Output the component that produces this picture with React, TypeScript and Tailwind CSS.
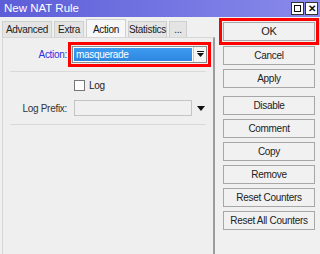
const font = "font-['Liberation_Sans',Arial,sans-serif]";
const txt = "text-[10px] tracking-[-0.3px]";

const tabs = [
  { label: "Advanced", w: "w-[50px]" },
  { label: "Extra", w: "w-[30px]" },
  { label: "Action", w: "w-[40px]", active: true },
  { label: "Statistics", w: "w-[39px]" },
  { label: "...", w: "w-[18px]" },
];

function Btn({ label, className = "" }: { label: string; className?: string }) {
  return (
    <div
      className={`flex h-[19px] w-[92px] items-center justify-center whitespace-nowrap border border-[#a7a7a7] bg-[#f1f1f1] text-[#222] ${className}`}
    >
      {label}
    </div>
  );
}

export default function App() {
  return (
    <div className={`flex h-[254px] w-[320px] flex-col overflow-hidden bg-[#f0f0f0] ${font}`}>
      {/* title bar */}
      <div className="flex h-[17px] items-center justify-between bg-gradient-to-r from-[#5d5dd8] to-[#8a8aea] pl-[4px] pr-[2px]">
        <span className="text-[11.5px] text-white">New NAT Rule</span>
        <div className="flex gap-[1px]">
          <div className="flex h-[13px] w-[13px] items-center justify-center border border-[#333] bg-white">
            <div className="h-[7px] w-[7px] border border-[#111]" />
          </div>
          <div className="flex h-[13px] w-[13px] items-center justify-center border border-[#333] bg-white text-[10px] font-bold leading-none text-[#111]">
            ✕
          </div>
        </div>
      </div>

      <div className={`flex flex-1 ${txt}`}>
        {/* left: tabs + panel */}
        <div className="flex w-[215px] flex-col">
          <div className="flex items-end gap-[2px] pl-[2px] pt-[2px]">
            {tabs.map((t) =>
              t.active ? (
                <div
                  key={t.label}
                  className={`${t.w} -mb-[1px] flex h-[19px] items-center justify-center border border-b-0 border-[#cfcfcf] bg-[#f7f7f7] text-[#111]`}
                >
                  {t.label}
                </div>
              ) : (
                <div
                  key={t.label}
                  className={`${t.w} flex h-[16px] items-center justify-center border border-b-0 border-[#cfcfcf] bg-[#e4e4e4] text-[#222]`}
                >
                  {t.label}
                </div>
              )
            )}
          </div>
          <div className="ml-[2px] flex-1 border-l border-t border-r-2 border-l-[#d6d6d6] border-t-[#d6d6d6] border-r-[#9c9c9c] bg-[#efefef] pt-[8px]">
            {/* action */}
            <div className="flex h-[17px] items-center">
              <span className="w-[66px] pr-[2px] text-right text-[#3030e0]">Action:</span>
              <div className="ml-[3px] flex h-[17px] w-[135px] items-stretch border border-[#8a8a8a] bg-white outline-[3px] outline-offset-[1px] outline-[#ff0000] [outline-style:solid]">
                <div className="m-[1px] flex flex-1 items-center bg-gradient-to-b from-[#3d9bf0] to-[#2e86e0] pl-[2px] text-white">
                  masquerade
                </div>
                <div className="flex w-[13px] items-center justify-center border-l border-[#c8c8c8] bg-[#f4f4f4]">
                  <svg width="7" height="7" viewBox="0 0 7 7">
                    <rect x="0" y="0" width="7" height="1" fill="#111" />
                    <polygon points="0,2 7,2 3.5,6" fill="#111" />
                  </svg>
                </div>
              </div>
            </div>
            <div className="mx-[7px] mt-[8px] h-px bg-[#d9d9d9]" />
            {/* log */}
            <div className="mt-[6px] flex items-center pl-[71px]">
              <div className="h-[11px] w-[11px] border border-[#777] bg-white" />
              <span className="ml-[4px] text-[#222]">Log</span>
            </div>
            <div className="mt-[7px] flex items-center">
              <span className="w-[66px] pr-[2px] text-right text-[#333]">Log Prefix:</span>
              <div className="ml-[5px] h-[16px] w-[118px] border border-[#c4c4c4] bg-[#f0f0f0]" />
              <svg className="ml-[5px]" width="8" height="5" viewBox="0 0 8 5">
                <polygon points="0,0 8,0 4,5" fill="#111" />
              </svg>
            </div>
            <div className="mx-[7px] mt-[8px] h-px bg-[#d9d9d9]" />
          </div>
        </div>

        {/* right: buttons */}
        <div className="flex flex-1 flex-col gap-[4px] pl-[8px] pt-[5px]">
          <Btn label="OK" className="text-[11px] outline-[3px] outline-offset-[1px] outline-[#ff0000] [outline-style:solid]" />
          <Btn label="Cancel" className="mt-[1px]" />
          <Btn label="Apply" />
          <Btn label="Disable" className="mt-[4px]" />
          <Btn label="Comment" />
          <Btn label="Copy" />
          <Btn label="Remove" />
          <Btn label="Reset Counters" />
          <Btn label="Reset All Counters" />
        </div>
      </div>
    </div>
  );
}
